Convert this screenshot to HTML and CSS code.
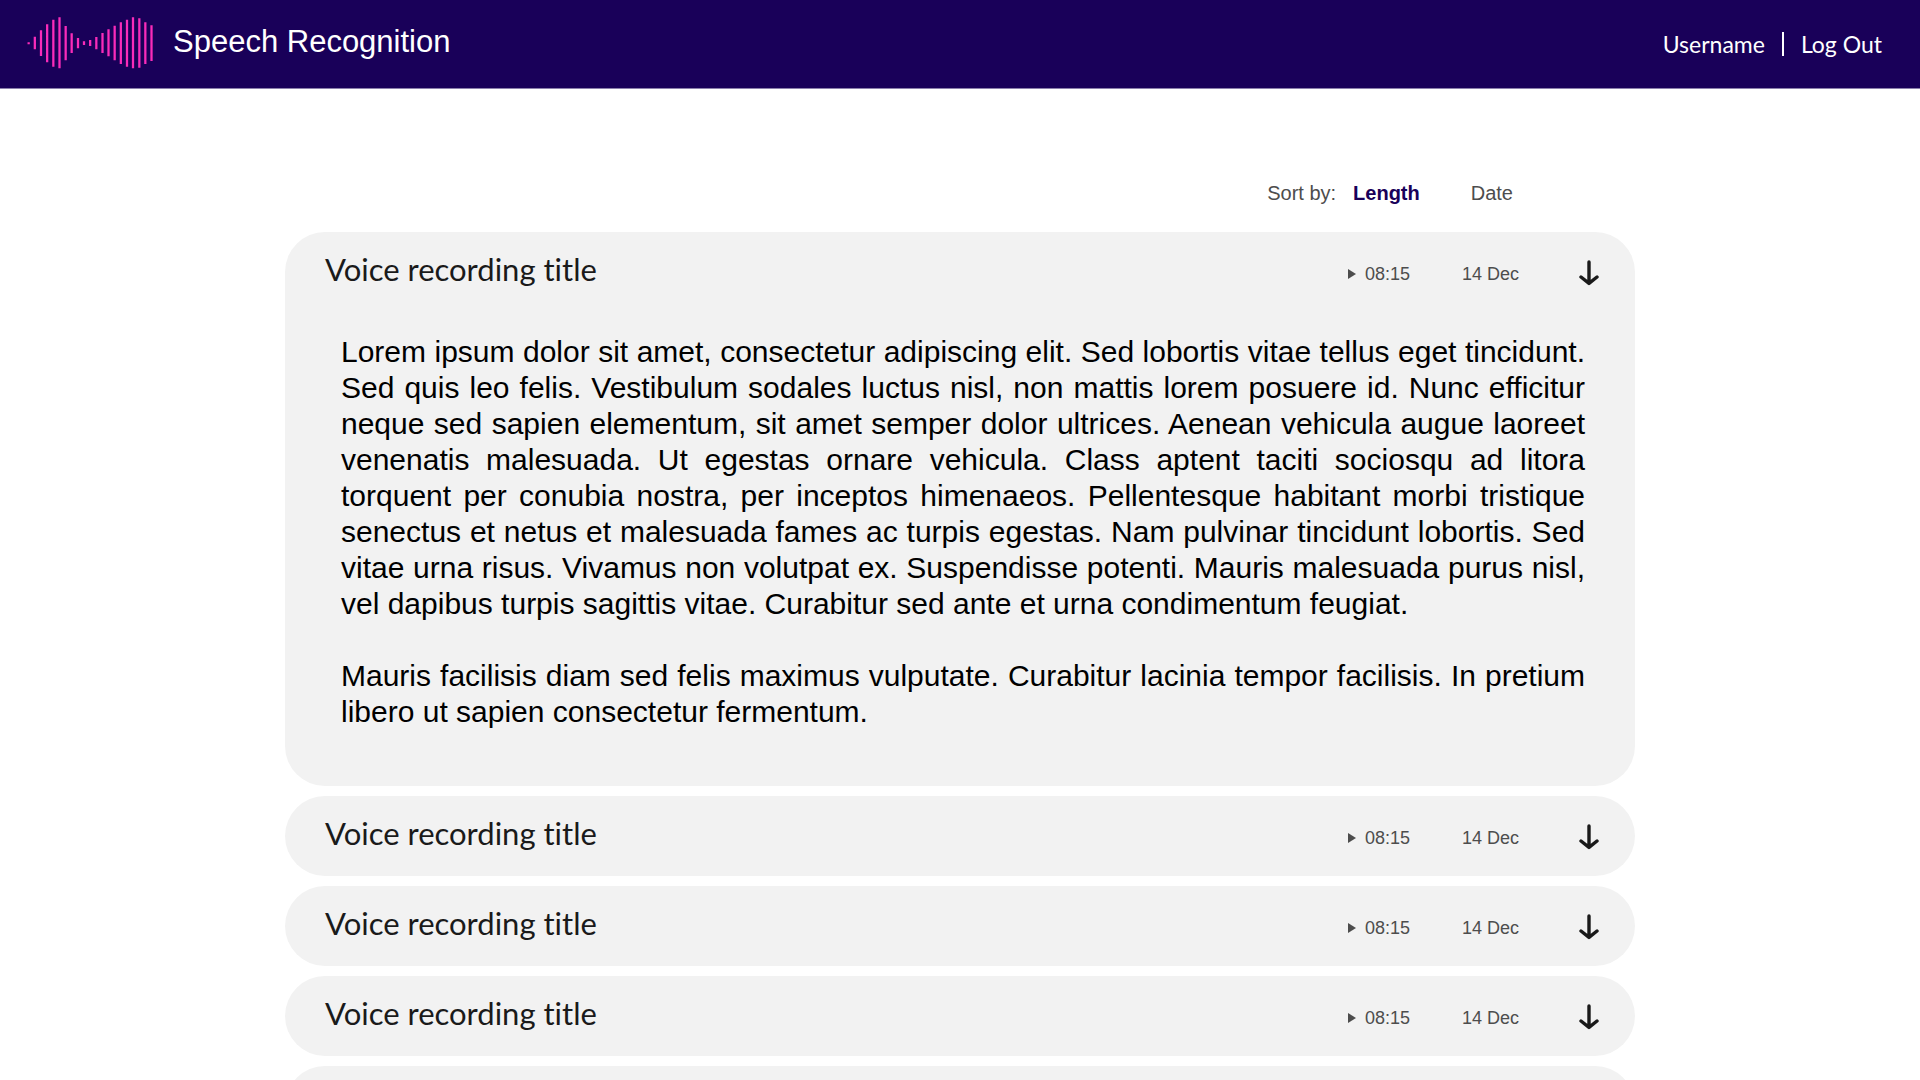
FILE: index.html
```html
<!DOCTYPE html>
<html lang="en">
<head>
<meta charset="utf-8">
<meta name="viewport" content="width=device-width, initial-scale=1">
<title>Speech Recognition</title>
<link rel="stylesheet" href="styles.css">
</head>
<body>
<svg class="symbols" aria-hidden="true">
  <symbol id="icon-play" viewBox="0 0 8 10"><path d="M0 0L8 5L0 10Z" fill="currentColor"/></symbol>
  <symbol id="icon-arrow" viewBox="0 0 20 26"><path d="M10 2V23M2 17L10 23.400L18 17" fill="none" stroke="currentColor" stroke-width="3.400" stroke-linecap="round" stroke-linejoin="round"/></symbol>
</svg>
<header class="site-header">
  <a class="brand" href="#">
    <svg class="brand-logo" viewBox="0 0 378 162" aria-hidden="true">
      <path transform="translate(-81 -50)" fill="none" stroke="#fa2bba" stroke-width="6.800" d="M86 126V132M104.500 109V147M123 90V167M141.500 72V186M160 58V199M178.500 51V204M197 77V180M215 99V158M234 113V144M252 123V134M270.500 119V137M289 110V147M307.500 98V158M325.500 87V168M344 76V180M362.500 66V191M381 58V199M399 51V204M418 54V202M436 66V191M454.500 75V182"/>
    </svg>
    <span class="brand-name">Speech Recognition</span>
  </a>
  <nav class="account">
    <a href="#">Username</a>
    <a class="logout" href="#">Log Out</a>
  </nav>
</header>
<main class="content">
  <div class="sort">
    <span class="sort-label">Sort by:</span>
    <button class="sort-option active" type="button" aria-pressed="true">Length</button>
    <button class="sort-option" type="button" aria-pressed="false">Date</button>
  </div>
  <div class="recordings">
    <article class="recording">
      <div class="recording-head">
        <h2 class="recording-title">Voice recording title</h2>
        <button class="play" type="button"><svg class="play-icon" aria-hidden="true"><use href="#icon-play"/></svg>08:15</button>
        <time class="date">14 Dec</time>
        <button class="toggle" type="button" aria-label="Collapse" aria-expanded="true"><svg class="arrow-icon" aria-hidden="true"><use href="#icon-arrow"/></svg></button>
      </div>
      <div class="transcript">
        <p>Lorem ipsum dolor sit amet, consectetur adipiscing elit. Sed lobortis vitae tellus eget tincidunt. Sed quis leo felis. Vestibulum sodales luctus nisl, non mattis lorem posuere id. Nunc efficitur neque sed sapien elementum, sit amet semper dolor ultrices. Aenean vehicula augue laoreet venenatis malesuada. Ut egestas ornare vehicula. Class aptent taciti sociosqu ad litora torquent per conubia nostra, per inceptos himenaeos. Pellentesque habitant morbi tristique senectus et netus et malesuada fames ac turpis egestas. Nam pulvinar tincidunt lobortis. Sed vitae urna risus. Vivamus non volutpat ex. Suspendisse potenti. Mauris malesuada purus nisl, vel dapibus turpis sagittis vitae. Curabitur sed ante et urna condimentum feugiat.</p>
        <p>Mauris facilisis diam sed felis maximus vulputate. Curabitur lacinia tempor facilisis. In pretium libero ut sapien consectetur fermentum.</p>
      </div>
    </article>
    <article class="recording">
      <div class="recording-head">
        <h2 class="recording-title">Voice recording title</h2>
        <button class="play" type="button"><svg class="play-icon" aria-hidden="true"><use href="#icon-play"/></svg>08:15</button>
        <time class="date">14 Dec</time>
        <button class="toggle" type="button" aria-label="Expand" aria-expanded="false"><svg class="arrow-icon" aria-hidden="true"><use href="#icon-arrow"/></svg></button>
      </div>
    </article>
    <article class="recording">
      <div class="recording-head">
        <h2 class="recording-title">Voice recording title</h2>
        <button class="play" type="button"><svg class="play-icon" aria-hidden="true"><use href="#icon-play"/></svg>08:15</button>
        <time class="date">14 Dec</time>
        <button class="toggle" type="button" aria-label="Expand" aria-expanded="false"><svg class="arrow-icon" aria-hidden="true"><use href="#icon-arrow"/></svg></button>
      </div>
    </article>
    <article class="recording">
      <div class="recording-head">
        <h2 class="recording-title">Voice recording title</h2>
        <button class="play" type="button"><svg class="play-icon" aria-hidden="true"><use href="#icon-play"/></svg>08:15</button>
        <time class="date">14 Dec</time>
        <button class="toggle" type="button" aria-label="Expand" aria-expanded="false"><svg class="arrow-icon" aria-hidden="true"><use href="#icon-arrow"/></svg></button>
      </div>
    </article>
    <article class="recording">
      <div class="recording-head">
        <h2 class="recording-title">Voice recording title</h2>
        <button class="play" type="button"><svg class="play-icon" aria-hidden="true"><use href="#icon-play"/></svg>08:15</button>
        <time class="date">14 Dec</time>
        <button class="toggle" type="button" aria-label="Expand" aria-expanded="false"><svg class="arrow-icon" aria-hidden="true"><use href="#icon-arrow"/></svg></button>
      </div>
    </article>
  </div>
</main>
</body>
</html>
```
FILE: styles.css
```css
* {
  box-sizing: border-box;
}

html {
  scrollbar-width: none;
}

body {
  margin: 0;
  background: #fff;
  color: #000;
  font-family: "Liberation Sans", Arial, sans-serif;
  font-variant-ligatures: none;
}

button {
  padding: 0;
  border: 0;
  background: none;
  color: inherit;
  font: inherit;
  cursor: pointer;
}

a {
  color: inherit;
  text-decoration: none;
}

.symbols {
  display: none;
}

.site-header {
  display: flex;
  align-items: center;
  justify-content: space-between;
  min-height: 89px;
  padding: 0 38px 0 27px;
  border-bottom: 1px solid #8b7fac;
  background: #190059;
  color: #fff;
}

.brand {
  display: flex;
  align-items: center;
  gap: 20px;
}

.brand-logo {
  width: 126px;
  height: 54px;
}

.brand-name {
  padding-bottom: 4px;
  font-size: 31px;
  line-height: 36px;
}

.account {
  display: flex;
  align-items: center;
  font-family: Lato, "Noto Sans", sans-serif;
  font-size: 23px;
  line-height: 24px;
}

.logout {
  margin-left: 17px;
  padding-left: 17px;
  border-left: 2px solid #fff;
}

.content {
  max-width: 1350px;
  margin: 0 auto;
  padding: 92px 0 40px;
}

.sort {
  display: flex;
  justify-content: flex-end;
  margin-bottom: 27px;
  padding-right: 122px;
  color: #4d4d4d;
  font-size: 20px;
  line-height: 24px;
}

.sort-label {
  margin-right: 17px;
}

.sort-option + .sort-option {
  margin-left: 51px;
}

.sort-option.active {
  color: #190059;
  font-weight: bold;
}

.recordings {
  display: flex;
  flex-direction: column;
  gap: 10px;
}

.recording {
  border-radius: 40px;
  background: #f2f2f2;
}

.recording-head {
  display: flex;
  align-items: center;
  min-height: 80px;
  padding: 0 36px 0 40px;
  color: #4d4d4d;
  font-size: 18px;
  line-height: 20px;
}

.recording-title {
  flex: 1;
  margin: 0;
  padding-bottom: 6px;
  color: #1a1a1a;
  font-family: Lato, "Noto Sans", sans-serif;
  font-size: 31px;
  font-weight: 400;
  line-height: 36px;
}

.play {
  display: flex;
  align-items: center;
  gap: 9px;
  padding-top: 4px;
}

.play-icon {
  width: 8px;
  height: 10px;
}

.date {
  margin-left: 52px;
  padding-top: 4px;
}

.toggle {
  display: flex;
  margin-left: 60px;
  padding-top: 2px;
  color: #1a1a1a;
}

.arrow-icon {
  width: 20px;
  height: 26px;
}

.transcript {
  padding: 22px 50px 56px 56px;
  font-size: 30px;
  line-height: 36px;
  text-align: justify;
}

.transcript p {
  margin: 0 0 36px;
}

.transcript p:last-child {
  margin-bottom: 0;
}
```
